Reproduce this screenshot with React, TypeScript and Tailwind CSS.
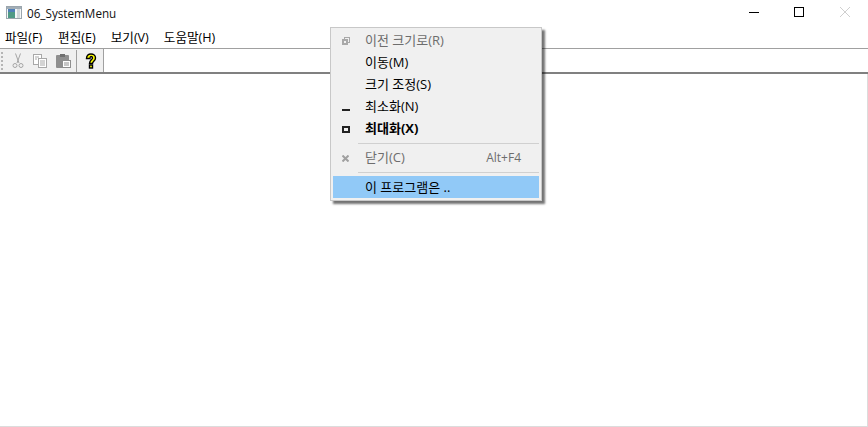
import React from "react";

const font = { fontFamily: '"Open Sans", "Noto Sans CJK KR", sans-serif' };

function Item({ icon, label, shortcut, state }: { icon?: React.ReactNode; label: string; shortcut?: string; state?: "disabled" | "bold" | "active" }) {
  const color = state === "disabled" ? "text-[#6d6d6d]" : "text-black";
  const active = state === "active";
  return (
    <div className={`flex h-[22px] items-center ${active ? "bg-[#91c9f7]" : ""} ${color}`}>
      <div className="flex w-[25px] justify-center">{icon}</div>
      <div className={`ml-[7px] flex-1 text-[13px] leading-[20px] ${active ? "" : "mb-[2px]"} ${state === "bold" ? "font-bold" : ""}`}>{label}</div>
      {shortcut && <div className="mr-[18px] text-[12px]">{shortcut}</div>}
    </div>
  );
}

export default function App() {
  return (
    <div className="relative flex h-[427px] w-[868px] flex-col overflow-hidden bg-white text-[12px] text-black" style={font}>
      {/* Title bar */}
      <div className="flex h-[27px] shrink-0 items-start">
        <svg className="ml-[6px] mt-[6px]" width="16" height="14" viewBox="0 0 16 14">
          <rect x="0.5" y="0.5" width="15" height="12" fill="#f4f7f8" stroke="#9aa5ad" />
          <rect x="1" y="1" width="14" height="2" fill="#a3aeb6" />
          <rect x="2" y="3" width="7" height="9" fill="#4f9a86" />
          <rect x="2" y="3" width="7" height="3" fill="#4f7fb8" />
          <rect x="11" y="3" width="3" height="9" fill="#cfd6da" />
        </svg>
        <span className="ml-[5px] text-[11.7px] leading-[26px] text-[#111]">06_SystemMenu</span>
        <div className="ml-auto flex items-center">
          <svg width="46" height="26" viewBox="0 0 46 26"><path d="M19 12.5h10" stroke="#000" fill="none" /></svg>
          <svg width="46" height="26" viewBox="0 0 46 26"><rect x="18.5" y="7.5" width="9" height="9" stroke="#000" fill="none" /></svg>
          <svg width="46" height="26" viewBox="0 0 46 26"><path d="M18 7l10 10M28 7L18 17" stroke="#cfcfcf" fill="none" /></svg>
        </div>
      </div>
      {/* Menu bar */}
      <div className="flex h-[22px] shrink-0 items-center border-b border-[#a0a0a0] bg-white pt-[1px] text-[12.6px]">
        <span className="ml-[5px]">파일(F)</span>
        <span className="ml-[16px]">편집(E)</span>
        <span className="ml-[15px]">보기(V)</span>
        <span className="ml-[15px]">도움말(H)</span>
      </div>
      {/* Toolbar */}
      <div className="flex h-[25px] shrink-0 border-b-2 border-[#808080] bg-white">
        <div className="flex w-[103px] items-center bg-[#f0f0f0]">
          <div className="ml-[1px] mr-[5px] h-[18px] w-[3px] border-l-2 border-dotted border-[#b5b5b5]" />
          <svg width="16" height="16" viewBox="0 0 16 16" fill="none" stroke="#a5a5a5" className="ml-[1px]">
            <path d="M5.5 0.5L9 10M10.500 0.5L7 10" />
            <circle cx="5" cy="12.500" r="2" />
            <circle cx="11" cy="12.500" r="2" />
          </svg>
          <svg width="16" height="16" viewBox="0 0 16 16" className="ml-[6px]" fill="#fff" stroke="#a8a8a8">
            <rect x="1.5" y="1.5" width="8" height="10" />
            <rect x="6.5" y="5.5" width="8" height="9" />
            <path d="M8 8h5M8 10h5M8 12h5M3 4h4M3 6h2" />
          </svg>
          <svg width="16" height="16" viewBox="0 0 16 16" className="ml-[7px]">
            <rect x="1" y="2" width="13" height="13" rx="1" fill="#8f8f8f" />
            <rect x="5" y="1" width="5" height="3" fill="#6f6f6f" />
            <rect x="7.5" y="7.5" width="8" height="7" fill="#fff" stroke="#8f8f8f" />
            <path d="M9 10h5M9 12h5" stroke="#8f8f8f" />
          </svg>
          <div className="ml-[5px] h-[22px] w-[1px] bg-[#a0a0a0]" />
          <svg width="16" height="16" viewBox="0 0 16 16" className="ml-[6px]">
            <path d="M3.5 5.5C3.500 2.500 5.500 1 8 1s4.500 1.500 4.500 4c0 3-3 3.500-3 5.500h-3c0-3.500 3-4 3-5.500 0-1-.6-1.500-1.500-1.500S7 4 7 5.500z" fill="#ffff00" stroke="#000" strokeWidth="1.4" />
            <rect x="6.5" y="12" width="3" height="3" fill="#ffff00" stroke="#000" strokeWidth="1.4" />
          </svg>
        </div>
        <div className="h-full w-[1px] bg-[#a0a0a0]" />
      </div>
      {/* Client area */}
      <div className="flex-1 border-b border-r border-[#dcdcdc] bg-white" />
      {/* Popup menu */}
      <div className="absolute left-[330px] top-[27px] w-[212px] border border-[#c8c8c8] bg-[#f0f0f0] p-[2px] shadow-[3px_3px_2px_rgba(0,0,0,0.55)]">
        <Item state="disabled" label="이전 크기로(R)" icon={
          <svg width="8" height="8" viewBox="0 0 8 8" fill="none" stroke="#a8a8a8"><rect x="2.5" y="0.5" width="5" height="5" /><rect x="1" y="3" width="4" height="4" fill="#f0f0f0" strokeWidth="2" /></svg>
        } />
        <Item label="이동(M)" />
        <Item label="크기 조정(S)" />
        <Item label="최소화(N)" icon={<div className="mt-[6px] h-[2px] w-[8px] bg-[#222]" />} />
        <Item state="bold" label="최대화(X)" icon={<div className="h-[7px] w-[8px] border-2 border-[#222]" />} />
        <div className="ml-[25px] my-[3px] h-[1px] bg-[#d0d0d0]" />
        <Item state="disabled" label="닫기(C)" shortcut="Alt+F4" icon={
          <svg width="7" height="7" viewBox="0 0 7 7" stroke="#a0a0a0" strokeWidth="2"><path d="M0.5 0.5l6 6M6.5 0.5l-6 6" /></svg>
        } />
        <div className="ml-[25px] my-[3px] h-[1px] bg-[#d0d0d0]" />
        <Item state="active" label="이 프로그램은 .." />
      </div>
    </div>
  );
}
